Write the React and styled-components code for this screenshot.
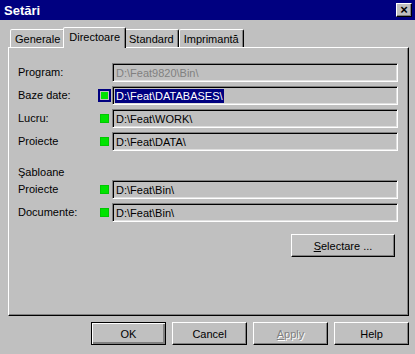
import { Fragment } from 'react';
import styled, { createGlobalStyle } from 'styled-components';

const GlobalStyle = createGlobalStyle`
  *, *::before, *::after {
    box-sizing: border-box;
  }
  html, body {
    margin: 0;
    padding: 0;
    background: #c0c0c0;
  }
  body {
    font-family: "Liberation Sans", Arial, sans-serif;
    font-size: 11px;
    color: #000;
  }
`;

const Dialog = styled.div`
  width: 415px;
  height: 354px;
  background: #c0c0c0;
  display: flex;
  flex-direction: column;
  overflow: hidden;
`;

const TitleBar = styled.div`
  height: 20px;
  flex-shrink: 0;
  background: #000080;
  display: flex;
  align-items: center;
  justify-content: space-between;
  padding: 0 3px 0 4px;
  color: #fff;
  font-weight: bold;
  font-size: 13px;
`;

const CloseBox = styled.div`
  width: 16px;
  height: 14px;
  background: #c0c0c0;
  border: 1px solid;
  border-color: #fff #000 #000 #fff;
  box-shadow: inset -1px -1px 0 #808080;
  color: #000;
  font-size: 13px;
  line-height: 11px;
  text-align: center;
  font-weight: bold;
`;

const Body = styled.div`
  padding: 7px 6px 0 8px;
  display: flex;
  flex-direction: column;
`;

const TabStrip = styled.div`
  display: flex;
  align-items: flex-end;
  padding-left: 2px;
  height: 20px;
  position: relative;
  z-index: 1;
`;

const Tab = styled.div`
  height: ${p => (p.$active ? '21px' : '18px')};
  margin: ${p => (p.$active ? '0 -2px -1px -2px' : '0')};
  padding: ${p => (p.$active ? '0 5px 2px' : '0 4px')};
  background: #c0c0c0;
  border: 1px solid;
  border-bottom: none;
  border-color: #fff #000 transparent #fff;
  box-shadow: inset -1px 0 0 #808080;
  border-radius: 2px 2px 0 0;
  display: flex;
  align-items: center;
  white-space: nowrap;
  position: relative;
  z-index: ${p => (p.$active ? 2 : 1)};
`;

const Panel = styled.div`
  height: 269px;
  border: 1px solid;
  border-color: #fff #000 #000 #fff;
  box-shadow: inset -1px -1px 0 #808080;
  padding: 15px 10px 0 9px;
  display: flex;
  flex-direction: column;
`;

const Rows = styled.div`
  display: grid;
  grid-template-columns: 82px 12px 1fr;
  row-gap: 4px;
  align-items: center;
`;

const Label = styled.div`
  line-height: 19px;
`;

const Section = styled.div`
  margin: 14px 0 1px;
  line-height: 14px;
`;

const Indicator = styled.div`
  width: 9px;
  height: 9px;
  background: #00e400;
  border: 1px solid ${p => (p.$focus ? '#c0c0c0' : '#00c800')};
  outline: ${p => (p.$focus ? '2px solid #000080' : 'none')};
  visibility: ${p => (p.$hidden ? 'hidden' : 'visible')};
`;

const Field = styled.div`
  height: 19px;
  border: 1px solid;
  border-color: #808080 #fff #fff #808080;
  box-shadow: inset 1px 1px 0 #000, inset -1px -1px 0 #dfdfdf;
  background: #c0c0c0;
  padding: 0 3px;
  display: flex;
  align-items: center;
  color: ${p => (p.$disabled ? '#808080' : '#000')};
  white-space: nowrap;
  overflow: hidden;
`;

const Selected = styled.span`
  background: #000080;
  color: #fff;
  padding: 1px 1px;
  margin-left: -1px;
`;

const ButtonRow = styled.div`
  display: flex;
  justify-content: flex-end;
  gap: 6px;
  padding: ${p => (p.$inPanel ? '12px 3px 0 0' : '6px 0 0 0')};
`;

const Button = styled.div`
  width: ${p => p.$w || 75}px;
  height: 23px;
  background: #c0c0c0;
  border: 1px solid;
  border-color: ${p => (p.$default ? '#000' : '#fff #000 #000 #fff')};
  box-shadow: ${p =>
    p.$default
      ? 'inset 1px 1px 0 #fff, inset -2px -2px 0 #808080'
      : 'inset -1px -1px 0 #808080'};
  display: flex;
  align-items: center;
  justify-content: center;
  color: ${p => (p.$disabled ? '#808080' : '#000')};
  text-shadow: ${p => (p.$disabled ? '1px 1px 0 #fff' : 'none')};
`;

const rows = [
  { label: 'Program:', path: 'D:\\Feat9820\\Bin\\', disabled: true },
  { label: 'Baze date:', path: 'D:\\Feat\\DATABASES\\', focus: true },
  { label: 'Lucru:', path: 'D:\\Feat\\WORK\\' },
  { label: 'Proiecte', path: 'D:\\Feat\\DATA\\' },
];

const templates = [
  { label: 'Proiecte', path: 'D:\\Feat\\Bin\\' },
  { label: 'Documente:', path: 'D:\\Feat\\Bin\\' },
];

const renderRow = r => (
  <Fragment key={r.label + r.path}>
    <Label>{r.label}</Label>
    <Indicator $hidden={r.disabled} $focus={r.focus} />
    <Field $disabled={r.disabled}>
      {r.focus ? <Selected>{r.path}</Selected> : r.path}
    </Field>
  </Fragment>
);

const App = () => {
  return (
    <>
      <GlobalStyle />
      <Dialog>
        <TitleBar>
          <span>Setări</span>
          <CloseBox>×</CloseBox>
        </TitleBar>
        <Body>
          <TabStrip>
            <Tab>Generale</Tab>
            <Tab $active>Directoare</Tab>
            <Tab>Standard</Tab>
            <Tab>Imprimantă</Tab>
          </TabStrip>
          <Panel>
            <Rows>{rows.map(renderRow)}</Rows>
            <Section>Şabloane</Section>
            <Rows>{templates.map(renderRow)}</Rows>
            <ButtonRow $inPanel>
              <Button $w={104}>
                <span><u>S</u>electare ...</span>
              </Button>
            </ButtonRow>
          </Panel>
          <ButtonRow>
            <Button $default>OK</Button>
            <Button>Cancel</Button>
            <Button $disabled>
              <span><u>A</u>pply</span>
            </Button>
            <Button>Help</Button>
          </ButtonRow>
        </Body>
      </Dialog>
    </>
  );
};

export default App;
